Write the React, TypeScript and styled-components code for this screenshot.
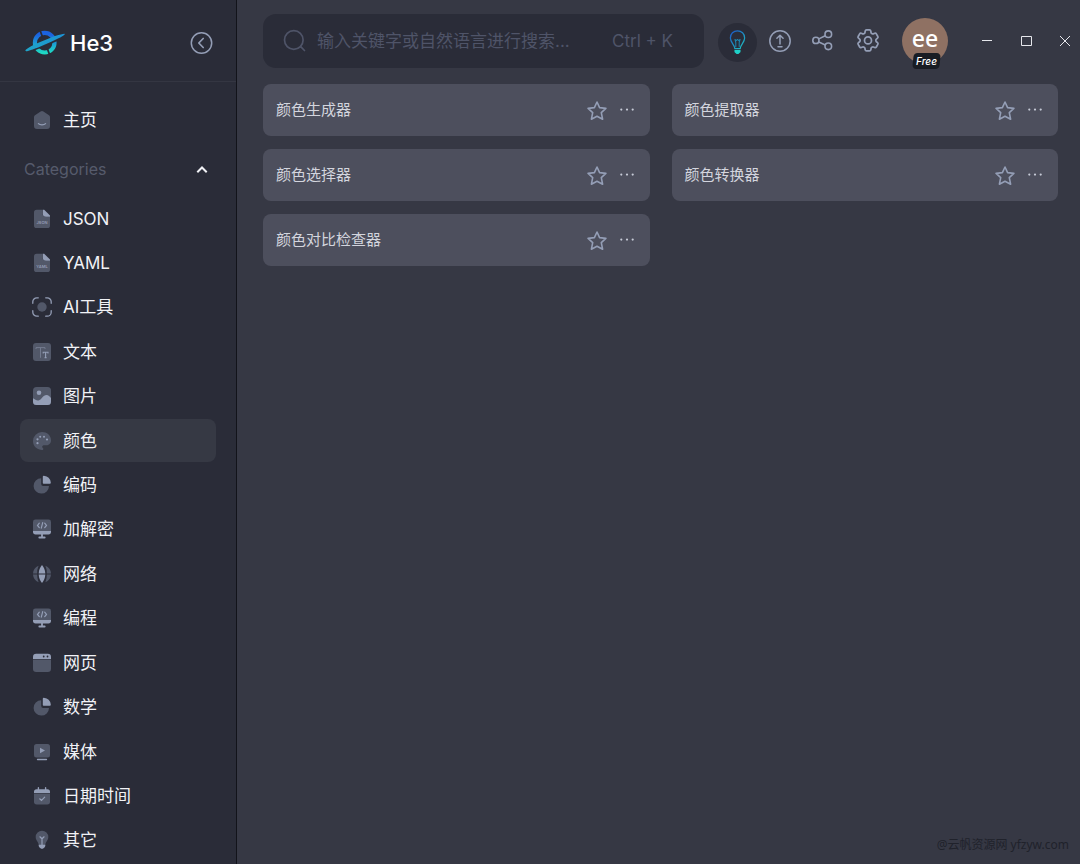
import React, { useState } from 'react';
import styled, { createGlobalStyle } from 'styled-components';
import { HiOutlineCog6Tooth } from 'react-icons/hi2';

const DIM = '#525869';
const LIT = '#949eb6';
const SIDE = '#2a2c38';

const GlobalStyle = createGlobalStyle`
  *, *::before, *::after { box-sizing: border-box; }
  body {
    margin: 0;
    background: #363844;
    color: #f1f2f6;
    font-family: Inter, "Noto Sans CJK SC", sans-serif;
  }
  button {
    border: 0;
    padding: 0;
    background: none;
    color: inherit;
    font: inherit;
    cursor: pointer;
  }
  svg { display: block; flex: none; }
`;

const Shell = styled.div`
  display: grid;
  grid-template-columns: 237px minmax(0, 1fr);
  min-height: 100vh;
`;

const Sidebar = styled.aside`
  display: flex;
  flex-direction: column;
  padding-bottom: 2px;
  background: ${SIDE};
  border-right: 1px solid #12131a;
`;

const Brand = styled.div`
  display: flex;
  align-items: center;
  justify-content: space-between;
  height: 82px;
  padding: 4px 23px 0 25px;
  border-bottom: 1px solid #343642;
`;

const BrandLink = styled.a`
  display: flex;
  align-items: center;
  gap: 4px;
  color: #ffffff;
  font-size: 22px;
  line-height: 32px;
  font-weight: 500;
  text-decoration: none;
`;

const Nav = styled.nav`
  flex: 1;
  display: flex;
  flex-direction: column;
  padding-top: 16px;
`;

const NavList = styled.ul`
  flex: 1;
  display: flex;
  flex-direction: column;
  justify-content: space-between;
  margin: 0;
  padding: 0 20px;
  list-style: none;
`;

const HomeRow = styled.div`
  padding: 0 20px;
`;

const NavLink = styled.a<{ $active?: boolean }>`
  display: flex;
  align-items: center;
  gap: 11px;
  height: 43px;
  padding-left: 12px;
  border-radius: 8px;
  background: ${(p) => (p.$active ? '#363944' : 'transparent')};
  color: #f1f2f6;
  font-size: 17px;
  line-height: 24px;
  text-decoration: none;
`;

const GroupToggle = styled.button`
  display: flex;
  align-items: center;
  justify-content: space-between;
  height: 56px;
  padding: 0 27px 0 24px;
  color: #565b6c;
  font-size: 16px;
  line-height: 24px;
`;

const Main = styled.main`
  display: flex;
  flex-direction: column;
  min-width: 0;
  padding-top: 14px;
`;

const TopBar = styled.header`
  display: flex;
  align-items: center;
  padding: 0 7px 0 26px;
`;

const SearchBox = styled.label`
  flex: 1;
  min-width: 0;
  display: flex;
  align-items: center;
  gap: 10px;
  height: 54px;
  padding: 0 31px 0 20px;
  border-radius: 13px;
  background: ${SIDE};
  color: #4f5468;
  font-size: 17px;
  line-height: 24px;
`;

const SearchInput = styled.input`
  flex: 1;
  min-width: 0;
  border: 0;
  padding: 0;
  outline: 0;
  background: transparent;
  color: #d7dae4;
  font: inherit;
  text-overflow: ellipsis;
  &::placeholder { color: #4f5468; opacity: 1; }
`;

const Shortcut = styled.span`
  white-space: nowrap;
`;

const BulbButton = styled.button`
  display: grid;
  place-items: center;
  width: 39px;
  height: 39px;
  margin: 2px 11px 0 14px;
  border-radius: 50%;
  background: ${SIDE};
`;

const Tools = styled.div`
  display: flex;
  align-items: center;
  gap: 20px;
`;

const Account = styled.button`
  position: relative;
  width: 46px;
  height: 46px;
  margin-left: 22px;
  border-radius: 50%;
  background: #8f7163;
  color: #ffffff;
  font-family: "Noto Sans", sans-serif;
  font-size: 23px;
  line-height: 40px;
  font-weight: 500;
`;

const Label = styled.span`
  display: block;
  height: 46px;
`;

const Plan = styled.span`
  position: absolute;
  left: 50%;
  bottom: -5px;
  width: 27px;
  margin-left: -12px;
  isolation: isolate;
  color: #ffffff;
  font-family: Inter, sans-serif;
  font-size: 10px;
  line-height: 16px;
  font-style: italic;
  font-weight: 500;
  text-align: center;
  &::before {
    content: "";
    position: absolute;
    inset: 0;
    z-index: -1;
    border-radius: 4px;
    background: #191d24;
    transform: skewX(-6deg);
  }
`;

const WindowControls = styled.div`
  display: flex;
  gap: 23px;
  margin-left: 31px;
`;

const CardGrid = styled.ul`
  display: grid;
  grid-template-columns: repeat(2, minmax(0, 1fr));
  gap: 13px 22px;
  margin: 0;
  padding: 16px 22px 0 26px;
  list-style: none;
`;

const Card = styled.li`
  display: flex;
  align-items: center;
  gap: 12px;
  height: 52px;
  padding: 0 15px 0 13px;
  border-radius: 8px;
  background: #4d4f5d;
`;

const CardLink = styled.a`
  flex: 1;
  color: #d3d5de;
  font-size: 15px;
  line-height: 24px;
  text-decoration: none;
`;

const Credit = styled.footer`
  margin-top: auto;
  padding: 0 11px 10px;
  color: #20222b;
  font-family: "Noto Sans", "Noto Sans CJK SC", sans-serif;
  font-size: 12px;
  line-height: 18px;
  text-align: right;
`;

const FileIcon = ({ tag }: { tag: string }) => (
  <svg width="20" height="20" viewBox="0 0 20 20" aria-hidden="true">
    <path d="M4.600.800H10.600V4.600a3.200 3.200 0 0 0 3.200 3.200H18V16.400a2.600 2.600 0 0 1-2.600 2.600H4.600A2.600 2.600 0 0 1 2 16.400V3.400A2.600 2.600 0 0 1 4.600.800Z" fill={DIM} />
    <path d="M10.800.800H12.200L18 6.400V7.800H14a3.200 3.200 0 0 1-3.200-3.200Z" fill={LIT} />
    <text x="10" y="15.200" textAnchor="middle" fontSize="4" fontWeight="600" fill={LIT}>{tag}</text>
  </svg>
);

const PieIcon = () => (
  <svg width="20" height="20" viewBox="0 0 20 20" aria-hidden="true">
    <path d="M9.200 3.200V9a2 2 0 0 0 2 2H17A7.700 7.700 0 1 1 9.200 3.200Z" fill={DIM} />
    <path d="M10.800 1.800a1 1 0 0 1 1.100-1 7.800 7.800 0 0 1 6.900 6.700c0 .9-.4 1.300-1.100 1.300H11.600a.8.800 0 0 1-.8-.8Z" fill={LIT} />
  </svg>
);

const CodeScreenIcon = () => (
  <svg width="20" height="20" viewBox="0 0 20 20" aria-hidden="true">
    <path d="M3.400.600H16.600A2.400 2.400 0 0 1 19 3V11.600H1V3A2.400 2.400 0 0 1 3.400.600Z" fill={DIM} />
    <path d="M1 11.800H19V12.800A2.600 2.600 0 0 1 16.400 15.400H10.900V17.600H12.700a.9.900 0 0 1 0 1.800H7.300a.9.900 0 0 1 0-1.800H9.100V15.400H3.600A2.600 2.600 0 0 1 1 12.800Z" fill={LIT} />
    <path d="M7.300 4.200 5.500 6.400 7.300 8.600M12.700 4.200 14.500 6.400 12.700 8.600M10.700 3.600 9.300 9.200" stroke={LIT} strokeWidth="1.200" fill="none" strokeLinecap="round" />
  </svg>
);

const icons: Record<string, React.ReactNode> = {
  home: (
    <svg width="20" height="20" viewBox="0 0 20 20" aria-hidden="true">
      <path d="M8.600 1.500a2.300 2.300 0 0 1 2.800 0L17 5.300a2.400 2.400 0 0 1 1 2V16a3 3 0 0 1-3 3H5a3 3 0 0 1-3-3V7.300a2.400 2.400 0 0 1 1-2Z" fill={DIM} />
      <path d="M6.400 13.600C8 15.300 12 15.300 13.600 13.600" stroke={LIT} strokeWidth="1.200" fill="none" strokeLinecap="round" />
    </svg>
  ),
  ai: (
    <svg width="20" height="20" viewBox="0 0 20 20" aria-hidden="true">
      <circle cx="10" cy="10" r="4.700" fill={DIM} />
      <path d="M.800 6.300V4.800a4 4 0 0 1 4-4H6.300M13.700.800H15.200a4 4 0 0 1 4 4V6.300M19.200 13.700V15.200a4 4 0 0 1-4 4H13.700M6.300 19.200H4.800a4 4 0 0 1-4-4V13.700" stroke={LIT} strokeWidth="1.300" fill="none" strokeLinecap="round" />
    </svg>
  ),
  text: (
    <svg width="20" height="20" viewBox="0 0 20 20" aria-hidden="true">
      <rect x="1" y="1" width="18" height="18" rx="3" fill={DIM} />
      <path d="M4 7V5.600H13V7M8.500 5.600V15.800" stroke="#737b8f" strokeWidth="1" fill="none" />
      <path d="M11.200 11.400V10.300H16V11.400M13.600 10.300V15.600M12.600 15.600H14.600" stroke={LIT} strokeWidth="1.100" fill="none" />
    </svg>
  ),
  image: (
    <svg width="20" height="20" viewBox="0 0 20 20" aria-hidden="true">
      <rect x="1" y="1" width="18" height="18" rx="3.500" fill={DIM} />
      <circle cx="7" cy="6.700" r="2.300" fill={LIT} />
      <path d="M1 12.300C3 13.500 4.500 14.700 6.500 14.400 9.500 14 11 9 14.500 9 16.500 9 17.800 10.500 19 12V15.500A3.500 3.500 0 0 1 15.500 19H4.500A3.500 3.500 0 0 1 1 15.500Z" fill={LIT} />
    </svg>
  ),
  palette: (
    <svg width="20" height="20" viewBox="0 0 20 20" aria-hidden="true">
      <path d="M10 1C15 1 19 4.500 19 9.300 19 13 16.500 14.600 13.500 14.300 11.500 14 10 14.500 10.200 16 10.400 17.300 12 17.400 11.200 18.500 10.600 19.300 9 19 7.500 18.600 3.600 17.500 1 14 1 10A9 9 0 0 1 10 1Z" fill={DIM} />
      <g fill={LIT}><circle cx="8.200" cy="5.700" r="1" /><circle cx="12" cy="5.700" r="1" /><circle cx="15" cy="8.500" r="1.100" /><circle cx="5.500" cy="8.300" r="1.100" /><circle cx="5.500" cy="12.200" r="1.100" /></g>
    </svg>
  ),
  pie: <PieIcon />,
  code: <CodeScreenIcon />,
  globe: (
    <svg width="20" height="20" viewBox="0 0 20 20" aria-hidden="true">
      <path d="M6.600 1.700A17 17 0 0 0 5.200 9.400H1A9 9 0 0 1 6.600 1.700ZM13.400 1.700A9 9 0 0 1 19 9.400H14.800A17 17 0 0 0 13.400 1.700ZM1 10.600H5.200A17 17 0 0 0 6.600 18.300 9 9 0 0 1 1 10.600ZM14.800 10.600H19A9 9 0 0 1 13.400 18.300 17 17 0 0 0 14.800 10.600Z" fill={DIM} />
      <path d="M10 1C11.800 3 13.200 6 13.300 9.400H6.700C6.800 6 8.200 3 10 1ZM6.700 10.600H13.300C13.200 14 11.800 17 10 19 8.200 17 6.800 14 6.700 10.600Z" fill={LIT} />
    </svg>
  ),
  browser: (
    <svg width="20" height="20" viewBox="0 0 20 20" aria-hidden="true">
      <path d="M1 6.500H19V15.800A3.200 3.200 0 0 1 15.800 19H4.200A3.200 3.200 0 0 1 1 15.800Z" fill={DIM} />
      <path d="M4.200.700H15.800A3.200 3.200 0 0 1 19 3.900V6H1V3.900A3.200 3.200 0 0 1 4.200.700Z" fill={LIT} />
      <circle cx="11.700" cy="3.500" r=".9" fill={SIDE} /><circle cx="15.500" cy="3.500" r=".9" fill={SIDE} />
    </svg>
  ),
  media: (
    <svg width="20" height="20" viewBox="0 0 20 20" aria-hidden="true">
      <rect x="2" y="2" width="16" height="13.500" rx="2.500" fill={DIM} />
      <path d="M8 5.800 13 8.500 8 11.200Z" fill={LIT} />
      <path d="M5.500 17.500H14.500" stroke={LIT} strokeWidth="1.300" strokeLinecap="round" />
    </svg>
  ),
  calendar: (
    <svg width="20" height="20" viewBox="0 0 20 20" aria-hidden="true">
      <path d="M2 7.500H18V15.800A2.700 2.700 0 0 1 15.300 18.500H4.700A2.700 2.700 0 0 1 2 15.800Z" fill={DIM} />
      <path d="M2 7V5.800A2.500 2.500 0 0 1 4.500 3.300H5.700V1.800a.7.700 0 0 1 1.400 0V3.300H12.900V1.800a.7.700 0 0 1 1.400 0V3.300H15.500A2.500 2.500 0 0 1 18 5.800V7Z" fill={LIT} />
      <path d="M7.700 12.800 9.500 14.500 12.700 11.200" stroke={LIT} strokeWidth="1.200" fill="none" strokeLinecap="round" />
    </svg>
  ),
  bulb: (
    <svg width="20" height="20" viewBox="0 0 20 20" aria-hidden="true">
      <path d="M10 .700A6.300 6.300 0 0 1 16.300 7C16.300 10.500 13.800 11.200 13.200 15H6.800C6.200 11.200 3.700 10.500 3.700 7A6.300 6.300 0 0 1 10 .700Z" fill={DIM} />
      <path d="M7.900 6.800 10 8.800 12.100 6.800M10 8.800V15" stroke={LIT} strokeWidth="1.200" fill="none" strokeLinecap="round" />
      <path d="M6.700 14.800H13.300V16A3 3 0 0 1 11.500 18.200Q10 19.300 8.500 18.200A3 3 0 0 1 6.700 16Z" fill={LIT} />
    </svg>
  ),
};

const Logo = () => (
  <svg width="41" height="28" viewBox="0 0 41 28" aria-hidden="true">
    <defs>
      <linearGradient id="ring" x1="0" y1="0" x2="0" y2="1">
        <stop offset="0.1" stopColor="#1b63e0" />
        <stop offset="1" stopColor="#1ed8c4" />
      </linearGradient>
      <linearGradient id="orbit" x1="0" y1="0" x2="1" y2="0">
        <stop offset="0" stopColor="#1fa4c8" />
        <stop offset="1" stopColor="#1c92d4" />
      </linearGradient>
    </defs>
    <circle cx="19.700" cy="13.700" r="9.800" fill="none" stroke="url(#ring)" strokeWidth="4.200" />
    <path d="M14.500 0 17.500 8M22.300 19.500 25.200 27.500" stroke={SIDE} strokeWidth="1.800" />
    <path d="M5 20.800 34 8.800" stroke={SIDE} strokeWidth="4.600" />
    <path d="M.800 20.800C5 16.800 32 5.200 39.500 4.800 41 5.200 37 7.800 31.500 10.300 21 15.500 5 22.200 1.200 22.300.300 22.200.200 21.400.800 20.800Z" fill="url(#orbit)" />
  </svg>
);

const categories = [
  { label: 'JSON', icon: <FileIcon tag="JSON" /> },
  { label: 'YAML', icon: <FileIcon tag="YAML" /> },
  { label: 'AI工具', icon: icons.ai },
  { label: '文本', icon: icons.text },
  { label: '图片', icon: icons.image },
  { label: '颜色', icon: icons.palette },
  { label: '编码', icon: icons.pie },
  { label: '加解密', icon: icons.code },
  { label: '网络', icon: icons.globe },
  { label: '编程', icon: icons.code },
  { label: '网页', icon: icons.browser },
  { label: '数学', icon: icons.pie },
  { label: '媒体', icon: icons.media },
  { label: '日期时间', icon: icons.calendar },
  { label: '其它', icon: icons.bulb },
];

const tools = ['颜色生成器', '颜色提取器', '颜色选择器', '颜色转换器', '颜色对比检查器'];

export default function App() {
  const [open, setOpen] = useState(true);
  const [active, setActive] = useState('颜色');

  return (
    <>
      <GlobalStyle />
      <Shell>
        <Sidebar>
          <Brand>
            <BrandLink href="#">
              <Logo />
              He3
            </BrandLink>
            <button type="button" aria-label="收起侧栏">
              <svg width="24" height="24" viewBox="0 0 24 24" fill="none" stroke={LIT} strokeWidth="1.500" strokeLinecap="round" strokeLinejoin="round">
                <circle cx="12.500" cy="12" r="10.200" />
                <path d="M14.200 7.500 9.800 12 14.200 16.500" strokeWidth="1.700" />
              </svg>
            </button>
          </Brand>
          <Nav>
            <HomeRow>
              <NavLink href="#home">{icons.home}主页</NavLink>
            </HomeRow>
            <GroupToggle type="button" aria-expanded={open} onClick={() => setOpen(!open)}>
              Categories
              <svg width="14" height="14" viewBox="0 0 14 14" fill="none" stroke="#f1f2f6" strokeWidth="2" aria-hidden="true">
                <path d="M2.300 10.200 7 5.500 11.700 10.200" />
              </svg>
            </GroupToggle>
            {open && (
              <NavList>
                {categories.map((c) => (
                  <li key={c.label}>
                    <NavLink href={`#${c.label}`} $active={c.label === active} onClick={() => setActive(c.label)}>
                      {c.icon}
                      {c.label}
                    </NavLink>
                  </li>
                ))}
              </NavList>
            )}
          </Nav>
        </Sidebar>

        <Main>
          <TopBar>
            <SearchBox>
              <svg width="24" height="24" viewBox="0 0 24 24" fill="none" stroke="#4f5468" strokeWidth="1.700" strokeLinecap="round" aria-hidden="true">
                <circle cx="10.800" cy="11" r="9.300" />
                <path d="M17.700 17.700 21.500 21.500" />
              </svg>
              <SearchInput type="text" aria-label="搜索" placeholder="输入关键字或自然语言进行搜索..." />
              <Shortcut>Ctrl + K</Shortcut>
            </SearchBox>
            <BulbButton type="button" aria-label="提示">
              <svg width="19" height="27" viewBox="0 0 20 28" fill="none" aria-hidden="true">
                <defs>
                  <linearGradient id="glow" x1="0" y1="0" x2=".8" y2="1">
                    <stop offset="0" stopColor="#1c55c8" />
                    <stop offset="1" stopColor="#1fbcc0" />
                  </linearGradient>
                </defs>
                <path d="M7.200 20.500C7.200 16.500 2.500 14 2.500 9.300 2.500 4.700 5.800 1.700 10 1.700S17.500 4.700 17.500 9.300C17.500 14 12.800 16.500 12.800 20.500Z" stroke="url(#glow)" strokeWidth="1.300" strokeLinejoin="round" />
                <path d="M8.200 19V14L7.300 10.800 8.700 12 10 10.800 11.300 12 12.700 10.800 11.800 14V19" stroke="#1d84ae" strokeWidth="1.100" strokeLinejoin="round" />
                <path d="M6.800 21.800H13.200V23.500C13.200 24.500 12.200 25 11.800 25.300 11 26.500 9 26.500 8.200 25.300 7.800 25 6.800 24.500 6.800 23.500Z" fill="#1fd0c8" />
              </svg>
            </BulbButton>
            <Tools>
              <button type="button" aria-label="上传">
                <svg width="24" height="24" viewBox="0 0 24 24" fill="none" stroke={LIT} strokeWidth="1.500" strokeLinecap="round" strokeLinejoin="round">
                  <circle cx="12" cy="12" r="10.200" />
                  <path d="M12 15V6.500M8.900 9.300 12 6.300 15.100 9.300M10 17.800H14" />
                </svg>
              </button>
              <button type="button" aria-label="分享">
                <svg width="24" height="24" viewBox="0 0 24 24" fill="none" stroke={LIT} strokeWidth="1.600">
                  <circle cx="3.900" cy="11.400" r="3.100" />
                  <circle cx="16.300" cy="5.200" r="3.300" />
                  <circle cx="16.300" cy="17.300" r="3.300" />
                  <path d="M6.800 9.900 13.300 6.700M6.800 12.900 13.300 15.900" />
                </svg>
              </button>
              <button type="button" aria-label="设置">
                <HiOutlineCog6Tooth size={24} color={LIT} viewBox="1.700 2.200 20.600 20.600" />
              </button>
            </Tools>
            <Account type="button">
              <Label>ee</Label>
              <Plan>Free</Plan>
            </Account>
            <WindowControls>
              <button type="button" aria-label="最小化">
                <svg width="16" height="16" viewBox="0 0 16 16" stroke="#e6e7ec" fill="none"><path d="M3 7.500H13" /></svg>
              </button>
              <button type="button" aria-label="最大化">
                <svg width="16" height="16" viewBox="0 0 16 16" stroke="#e6e7ec" fill="none"><path d="M3.500 3.500H13.500V12.500H3.500Z" /></svg>
              </button>
              <button type="button" aria-label="关闭">
                <svg width="16" height="16" viewBox="0 0 16 16" stroke="#e6e7ec" fill="none"><path d="M3 3 13 13M13 3 3 13" /></svg>
              </button>
            </WindowControls>
          </TopBar>

          <CardGrid>
            {tools.map((name) => (
              <Card key={name}>
                <CardLink href={`#${name}`}>{name}</CardLink>
                <button type="button" aria-label={`收藏${name}`}>
                  <svg width="20" height="22" viewBox="0 0 20 22" fill="none" stroke={LIT} strokeWidth="1.600" strokeLinejoin="round">
                    <path d="M10 3 12.600 8.600 18.900 9.400 14.300 13.600 15.600 20.200 10 17.200 4.400 20.200 5.700 13.600 1.100 9.400 7.400 8.600Z" />
                  </svg>
                </button>
                <button type="button" aria-label={`${name}更多操作`}>
                  <svg width="16" height="16" viewBox="0 0 16 16" fill="#c6cad6">
                    <circle cx="2.300" cy="7.600" r="1.100" />
                    <circle cx="8" cy="7.600" r="1.100" />
                    <circle cx="13.700" cy="7.600" r="1.100" />
                  </svg>
                </button>
              </Card>
            ))}
          </CardGrid>
          <Credit>@云帆资源网 yfzyw.com</Credit>
        </Main>
      </Shell>
    </>
  );
}
